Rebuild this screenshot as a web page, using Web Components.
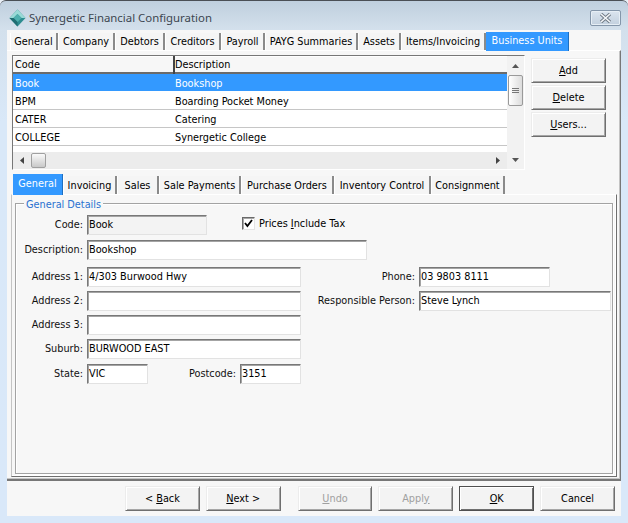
<!DOCTYPE html><html><head><meta charset="utf-8"><style>
html,body{margin:0;padding:0;width:628px;height:523px;overflow:hidden;background:#e9eff6}
</style></head><body>
<fin-window></fin-window>
<script>
function def(name,css,html){customElements.define(name,class extends HTMLElement{constructor(){super();const r=this.attachShadow({mode:'open'});r.innerHTML='<style>'+css+'</style>'+(typeof html==='function'?html(this):html)}})}
def('fin-button',`:host{display:flex;box-sizing:border-box;width:75px;height:25px;align-items:center;justify-content:center;padding-bottom:1px;background:#f3f3f3;color:#000;border:1px solid;border-color:#ececec #6f6f6f #6f6f6f #ececec;box-shadow:inset 1px 1px 0 #fff,inset -1px -1px 0 #a6a6a6}
:host([disabled]){color:#a0a0a0}
:host([default]){border-color:#4f4f4f;box-shadow:inset 1px 1px 0 #fff,inset -1px -1px 0 #6f6f6f}
::slotted(u){text-underline-offset:1px}`,'<span><slot></slot></span>');
def('fin-tab',`:host{display:flex;box-sizing:border-box;height:17px;align-items:center;justify-content:center;color:#000;border-right:2px solid #8a8a8a;border-left:1px solid #fff;background:#f5f5f5;white-space:nowrap;flex:none}
:host([active]){background:#3399ff;color:#fff;margin-top:-1px;border:0;align-items:flex-start;padding-top:2px;position:relative;z-index:1;border-right:1px solid #1f6fc0}`,'<slot></slot>');
def('fin-field',`:host{display:block;box-sizing:border-box;height:20px;background:#fff;border:1px solid;border-color:#787878 #e2e2e2 #e2e2e2 #787878;box-shadow:inset 1px 1px 0 #a4a4a4;line-height:17px;padding-left:1px;color:#000;white-space:nowrap;overflow:hidden;flex:none}
:host([ro]){background:#f3f3f3}`,'<slot></slot>');
def('fin-row',`:host{display:grid;grid-template-columns:160px 1fr;height:18px;box-sizing:border-box;border-bottom:1px solid #c6c6c6;line-height:19px;background:#fff;color:#000}
:host([selected]){background:#3399ff;color:#fff;border-bottom-color:#fff}
div{padding-left:2px}div:first-child{border-right:1px solid #c6c6c6}:host([selected]) div:first-child{border-right-color:#9ccbfa}`,t=>`<div>${t.getAttribute('code')}</div><div>${t.getAttribute('desc')}</div>`);
def('fin-line',`:host{display:flex;align-items:center;height:20px}
.l{width:67px;margin-right:4px;text-align:right;color:#111;white-space:nowrap;flex:none;padding-bottom:2px}`,t=>`<span class="l">${t.getAttribute('label')}</span><slot></slot>`);
def('fin-scroll-v',`:host{display:flex;flex-direction:column;align-items:center;width:17px;background:#f2f2f2;flex:none}
.a{height:19px;display:flex;align-items:center;justify-content:center;width:100%;flex:none}
.t{width:15px;height:31px;box-sizing:border-box;border:1px solid #9a9a9a;border-radius:2px;background:linear-gradient(90deg,#fff,#dcdcdc);display:flex;align-items:center;justify-content:center;flex:none}
.s{flex:1}`,`<div class="a"><svg width="7" height="4"><path d="M3.5 0 7 4H0Z" fill="#555"/></svg></div><div class="t"><svg width="7" height="6"><path d="M0 .5H7M0 2.5H7M0 4.5H7" stroke="#777"/></svg></div><div class="s"></div><div class="a"><svg width="7" height="4"><path d="M0 0H7L3.5 4Z" fill="#555"/></svg></div>`);
def('fin-scroll-h',`:host{display:flex;align-items:center;height:17px;background:#ececec;box-sizing:border-box}
.a{width:18px;display:flex;justify-content:center;flex:none}
.t{width:15px;height:15px;box-sizing:border-box;border:1px solid #a0a0a0;border-radius:2px;background:linear-gradient(#fafafa,#c9c9c9);flex:none}
.s{flex:1}`,`<div class="a"><svg width="4" height="7"><path d="M4 0V7L0 3.5Z" fill="#444"/></svg></div><div class="t"></div><div class="s"></div><div class="a"><svg width="4" height="7"><path d="M0 0V7L4 3.5Z" fill="#444"/></svg></div>`);
def('fin-grid',`:host{display:flex;box-sizing:border-box;width:513px;height:115px;border:1px solid;border-color:#777 #fff #fff #777;background:#f6f6f6;flex:none}
.m{width:494px;display:flex;flex-direction:column;flex:none}
.h{display:grid;grid-template-columns:160px 1fr;height:18px;box-sizing:border-box;background:#f7f7f7;border-bottom:2px solid #6b6b6b;box-shadow:inset 0 1px 0 #fff;line-height:18px;flex:none}
.h div{padding-left:2px}.h div:first-child{border-right:2px solid #444;width:158px}
.b{height:78px;background:#fff;overflow:hidden;flex:none}`,`<div class="m"><div class="h"><div>Code</div><div>Description</div></div><div class="b"><slot></slot></div><fin-scroll-h></fin-scroll-h></div><fin-scroll-v></fin-scroll-v>`);
def('fin-group',`:host{display:block;position:relative;box-sizing:border-box;height:271px;margin:8px 3px 0 3px;border:1px solid #a3a3a3;box-shadow:1px 1px 0 #fff,inset 1px 1px 0 #fff}
.c{position:absolute;left:8px;top:-6px;background:#f7f7f7;padding:0 2px;color:#2a72d0;line-height:13px}`,t=>`<span class="c">${t.getAttribute('caption')}</span><slot></slot>`);
def('fin-check',`:host{display:flex;align-items:center;gap:4px;white-space:nowrap;margin-top:-4px}
i{display:flex;box-sizing:border-box;width:13px;height:13px;border:1px solid;border-color:#6a6a6a #e4e4e4 #e4e4e4 #6a6a6a;background:#fff;box-shadow:inset 1px 1px 0 #a8a8a8}`,`<i><svg width="11" height="11" viewBox="0 0 11 11"><path d="M2 5 4.4 8 9 2" fill="none" stroke="#000" stroke-width="1.8"/></svg></i><span><slot></slot></span>`);
def('fin-form',`:host{display:block;padding-top:11px}
.r{margin-bottom:5px}
.cols{display:flex;margin-top:7px}
.left{display:flex;flex-direction:column;gap:4px;width:285px;flex:none}
.right{display:flex;flex-direction:column;gap:4px;flex:none}
.st{display:flex;align-items:center}
.lb{text-align:right;margin-right:4px;white-space:nowrap;color:#111;padding-bottom:2px;flex:none}`,`
<fin-line class="r" label="Code:"><fin-field ro style="width:120px">Book</fin-field><fin-check style="margin-left:35px">Prices <u>I</u>nclude Tax</fin-check></fin-line>
<fin-line label="Description:"><fin-field style="width:280px">Bookshop</fin-field></fin-line>
<div class="cols"><div class="left">
<fin-line label="Address 1:"><fin-field style="width:214px">4/303 Burwood Hwy</fin-field></fin-line>
<fin-line label="Address 2:"><fin-field style="width:214px"></fin-field></fin-line>
<fin-line label="Address 3:"><fin-field style="width:214px"></fin-field></fin-line>
<fin-line label="Suburb:"><fin-field style="width:214px">BURWOOD EAST</fin-field></fin-line>
<fin-line label="State:" style="margin-top:1px"><fin-field style="width:61px">VIC</fin-field><span class="lb" style="width:88px">Postcode:</span><fin-field style="width:61px">3151</fin-field></fin-line>
</div><div class="right">
<div class="st"><span class="lb" style="width:114px">Phone:</span><fin-field style="width:131px">03 9803 8111</fin-field></div>
<div class="st"><span class="lb" style="width:114px">Responsible Person:</span><fin-field style="width:192px">Steve Lynch</fin-field></div>
</div></div>`);
def('fin-window',`:host{display:flex;flex-direction:column;width:628px;height:523px;box-sizing:border-box;background:linear-gradient(#bfcfde 0,#d3e0ec 28px,#d9e8f8 120px,#d9e8f9 100%);border-top:1px solid #4a4f55;border-radius:6px 6px 0 0;padding:0 7px 7px;font-family:"DejaVu Sans",sans-serif;font-stretch:condensed;font-size:10.8px;color:#000}
.title{height:29px;display:flex;align-items:center;flex:none;font-family:"Noto Sans",sans-serif;font-stretch:normal;font-size:11.4px;color:#3c4650;padding-top:4px;box-sizing:border-box}
.title svg.logo{margin:0 3px 0 2px}
.close{margin-left:auto;width:31px;height:16px;box-sizing:border-box;border:1px solid #8496aa;border-radius:2px;display:flex;align-items:center;justify-content:center;background:linear-gradient(#dbe5ef,#c2d0de);box-shadow:inset 0 0 0 1px #e6eef5}
.client{flex:1;background:#f7f7f7;display:flex;flex-direction:column;min-height:0}
.tabs{display:flex;padding:3px 0 0 3px;height:20px;box-sizing:border-box;flex:none}
.page{height:431px;width:614px;box-sizing:border-box;border-right:1px solid #777;border-bottom:2px solid #777;box-shadow:inset -1px -1px 0 #c4c4c4;border-top:1px solid #fff;padding:4px 0 0 5px;flex:none}
.top{display:flex;height:115px}
.side{display:flex;flex-direction:column;gap:2px;margin:3px 0 0 6px}
.tabs2{display:flex;height:20px;margin:4px 0 0 1px;flex:none}
.tabs2 fin-tab{height:18px;margin-top:2px}
.tabs2 fin-tab[active]{height:21px;margin-top:0;padding-top:3px}
.inner{margin-left:-1px;width:606px;height:283px;box-sizing:border-box;border:1px solid;border-color:#fff #6f6f6f #6f6f6f #c4c4c4;box-shadow:inset -1px -1px 0 #fff;display:flow-root}
.foot{flex:1;display:flex;align-items:flex-start;padding:5px 0 0 118px}
.foot fin-button{margin-right:6px}`,`
<div class="title"><svg class="logo" width="17" height="18" viewBox="0 0 17 18"><path d="M8.5 .5 16.5 9 8.5 17.5 .5 9Z" fill="#2d8d90"/><path d="M8.5 .5 16.5 9 12.5 9 8.5 5 4.5 9 .5 9Z" fill="#9adad6"/><path d="M8.5 5 12.5 9 8.5 13 4.5 9Z" fill="#4fb0ae"/><path d="M.5 9 8.5 17.5V13L4.5 9Z" fill="#1f6d72"/></svg>Synergetic Financial Configuration<span class="close"><svg width="15" height="10" viewBox="0 0 15 10"><path d="M3 1 12 9M12 1 3 9" stroke="#6f7a86" stroke-width="3.4"/><path d="M3 1 12 9M12 1 3 9" stroke="#f4f6f8" stroke-width="1.6"/></svg></span></div>
<div class="client">
<div class="tabs">
<fin-tab style="width:48px">General</fin-tab><fin-tab style="width:57px">Company</fin-tab><fin-tab style="width:50px">Debtors</fin-tab><fin-tab style="width:56px">Creditors</fin-tab><fin-tab style="width:44px">Payroll</fin-tab><fin-tab style="width:93px">PAYG Summaries</fin-tab><fin-tab style="width:43px">Assets</fin-tab><fin-tab style="width:85px">Items/Invoicing</fin-tab><fin-tab active style="width:83px;height:19px">Business Units</fin-tab>
</div>
<div class="page">
<div class="top">
<fin-grid>
<fin-row selected code="Book" desc="Bookshop"></fin-row>
<fin-row code="BPM" desc="Boarding Pocket Money"></fin-row>
<fin-row code="CATER" desc="Catering"></fin-row>
<fin-row code="COLLEGE" desc="Synergetic College"></fin-row>
</fin-grid>
<div class="side"><fin-button><u>A</u>dd</fin-button><fin-button><u>D</u>elete</fin-button><fin-button><u>U</u>sers...</fin-button></div>
</div>
<div class="tabs2">
<fin-tab active style="width:50px">General</fin-tab><fin-tab style="width:54px">Invoicing</fin-tab><fin-tab style="width:42px">Sales</fin-tab><fin-tab style="width:82px">Sale Payments</fin-tab><fin-tab style="width:93px">Purchase Orders</fin-tab><fin-tab style="width:97px">Inventory Control</fin-tab><fin-tab style="width:74px">Consignment</fin-tab>
</div>
<div class="inner"><fin-group caption="General Details"><fin-form></fin-form></fin-group></div>
</div>
<div class="foot">
<fin-button>&lt; <u>B</u>ack</fin-button><fin-button style="margin-right:17px"><u>N</u>ext &gt;</fin-button><fin-button disabled><u>U</u>ndo</fin-button><fin-button disabled>Appl<u>y</u></fin-button><fin-button default><u>O</u>K</fin-button><fin-button>Cancel</fin-button>
</div>
</div>`);
</script></body></html>
